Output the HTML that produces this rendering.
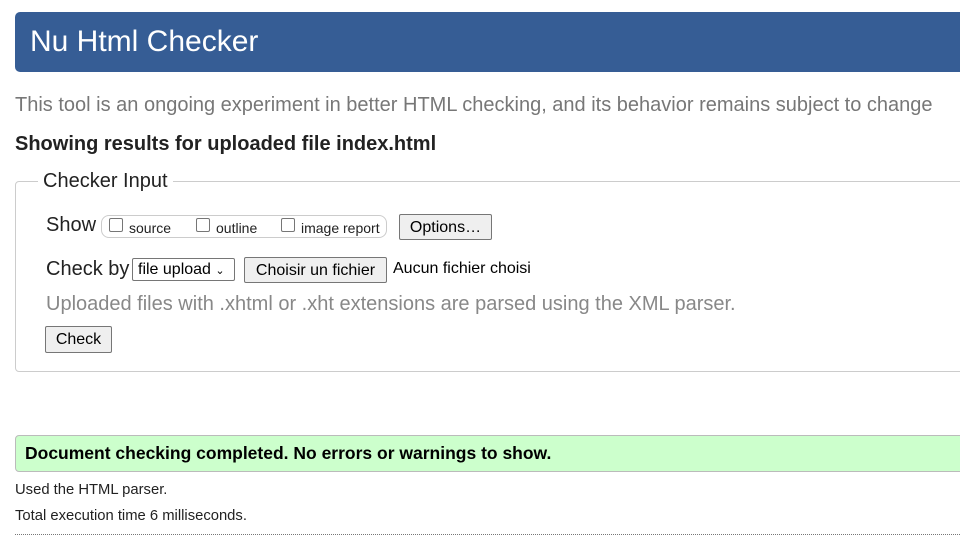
<!DOCTYPE html>
<html><head><meta charset="utf-8"><style>
body{margin:0;width:960px;height:550px;overflow:hidden;background:#fff;font-family:"Liberation Sans",Arial,sans-serif;color:#000;position:relative}
.a{position:absolute;white-space:nowrap}
.hdr{left:15px;top:12px;width:960px;height:60px;background:#365d95;border-radius:5px 0 0 5px;color:#fff;font-size:30px;line-height:60px;padding-left:15px;box-sizing:border-box}
.btn{position:absolute;background:#efefef;border:1px solid #767676;border-radius:2px;font-size:16px;box-sizing:border-box;text-align:center;line-height:25px}
.cb{display:inline-block;width:12px;height:12px;border:1px solid #767676;border-radius:2px;vertical-align:1px;margin-right:6px;background:#fff}
</style></head><body>
<div class="a hdr">Nu Html Checker</div>
<div class="a" style="left:15px;top:94px;font-size:20px;color:#777">This tool is an ongoing experiment in better HTML checking, and its behavior remains subject to change</div>
<div class="a" style="left:15px;top:133px;font-size:20px;font-weight:bold;color:#222">Showing results for uploaded file index.html</div>
<div class="a" style="left:15px;top:181px;width:960px;height:191px;border:1px solid #ccc;border-radius:4px;box-sizing:border-box"></div>
<div class="a" style="left:38px;top:170px;background:#fff;padding:0 5px;font-size:20px;color:#222">Checker Input</div>
<div class="a" style="left:46px;top:214px;font-size:20px;color:#222">Show</div>
<div class="a" style="left:101px;top:215px;width:286px;height:23px;border:1px solid #ccc;border-radius:8px;box-sizing:border-box"></div>
<div class="a" style="left:109px;top:218px;font-size:14px;color:#222"><span class="cb"></span>source</div>
<div class="a" style="left:196px;top:218px;font-size:14px;color:#222"><span class="cb"></span>outline</div>
<div class="a" style="left:281px;top:218px;font-size:14px;color:#222"><span class="cb"></span>image report</div>
<div class="btn" style="left:399px;top:214px;width:93px;height:26px">Options…</div>
<div class="a" style="left:46px;top:258px;font-size:20px;color:#222">Check by</div>
<div class="a" style="left:132px;top:258px;width:103px;height:23px;border:1px solid #767676;border-radius:2px;box-sizing:border-box;font-size:16px;line-height:21px;padding-left:5px">file upload <span style="font-size:11px">&#8964;</span></div>
<div class="btn" style="left:244px;top:257px;width:143px;height:26px">Choisir un fichier</div>
<div class="a" style="left:393px;top:260px;font-size:16px">Aucun fichier choisi</div>
<div class="a" style="left:46px;top:293px;font-size:20px;color:#888">Uploaded files with .xhtml or .xht extensions are parsed using the XML parser.</div>
<div class="btn" style="left:45px;top:326px;width:67px;height:27px;line-height:26px">Check</div>
<div class="a" style="left:15px;top:435px;width:960px;height:37px;background:#ccffcc;border:1px solid #bbb;border-radius:4px 0 0 4px;box-sizing:border-box"></div>
<div class="a" style="left:25px;top:443px;font-size:17.5px;font-weight:bold">Document checking completed. No errors or warnings to show.</div>
<div class="a" style="left:15px;top:482px;font-size:14.8px;color:#222">Used the HTML parser.</div>
<div class="a" style="left:15px;top:508px;font-size:14.8px;color:#222">Total execution time 6 milliseconds.</div>
<div class="a" style="left:15px;top:534px;width:945px;border-top:1px dotted #777"></div>
</body></html>
